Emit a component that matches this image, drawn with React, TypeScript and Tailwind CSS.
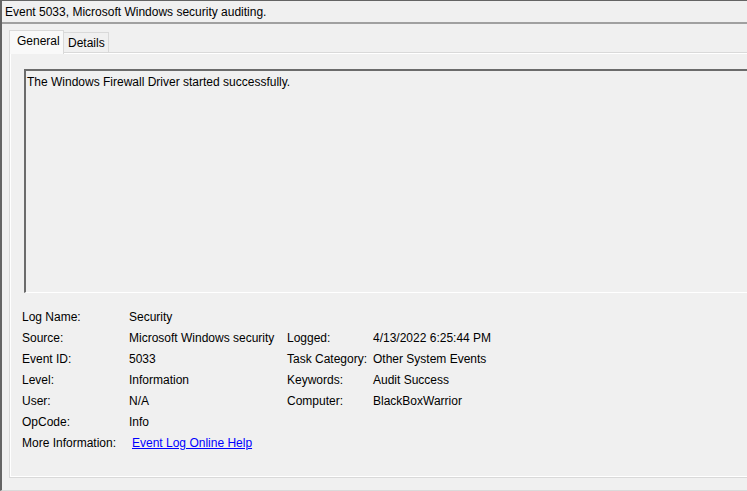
const rows: [string, string, string?, string?][] = [
  ["Log Name:", "Security"],
  ["Source:", "Microsoft Windows security", "Logged:", "4/13/2022 6:25:44 PM"],
  ["Event ID:", "5033", "Task Category:", "Other System Events"],
  ["Level:", "Information", "Keywords:", "Audit Success"],
  ["User:", "N/A", "Computer:", "BlackBoxWarrior"],
  ["OpCode:", "Info"],
];

const App = () => {
  return (
    <div
      className="w-[747px] h-[491px] overflow-hidden bg-[#f0f0f0] border-t border-t-[#646464] border-l-2 border-l-[#646464] border-b border-b-[#dadada] text-[12px] text-black flex flex-col"
      style={{ fontFamily: '"Liberation Sans", Arial, sans-serif' }}
    >
      <div className="h-[21px] pl-[3px] flex items-center leading-none">
        Event 5033, Microsoft Windows security auditing.
      </div>
      <div className="h-[2px] bg-[#a0a0a0]" />

      <div className="pt-[6px] pl-[7px] flex flex-col">
        {/* tabs */}
        <div className="flex items-end h-[22px]">
          <div className="relative z-10 h-[24px] -mb-[2px] w-[55px] bg-[#f9f9f9] border border-b-0 border-[#d9d9d9] pl-[7px] pt-[4px] leading-none">
            General
          </div>
          <div className="h-[20px] w-[45px] border border-l-0 border-b-0 border-[#d9d9d9] pl-[4px] pt-[4px] leading-none">
            Details
          </div>
        </div>

        {/* tab panel */}
        <div className="w-[770px] h-[426px] border border-[#d9d9d9]">
          <div className="h-full border border-white pl-[11px] pt-[15px]">
            <div className="ml-[2px] h-[224px] border-t-2 border-l-2 border-[#6b6b6b] border-b border-b-white pl-[1px] pt-[4px] leading-[14px]">
              The Windows Firewall Driver started successfully.
            </div>

            <div className="mt-[13px] grid grid-cols-[107px_158px_86px_1fr] auto-rows-[21px] items-center leading-none">
              {rows.map(([l1, v1, l2, v2]) => (
                <div key={l1} className="contents">
                  <div>{l1}</div>
                  <div>{v1}</div>
                  <div>{l2 ?? ""}</div>
                  <div>{v2 ?? ""}</div>
                </div>
              ))}
              <div>More Information:</div>
              <div className="col-span-3 pl-[3px]">
                <a href="#" className="text-[#0000ff] underline">
                  Event Log Online Help
                </a>
              </div>
            </div>
          </div>
        </div>
      </div>
    </div>
  );
};

export default App;
